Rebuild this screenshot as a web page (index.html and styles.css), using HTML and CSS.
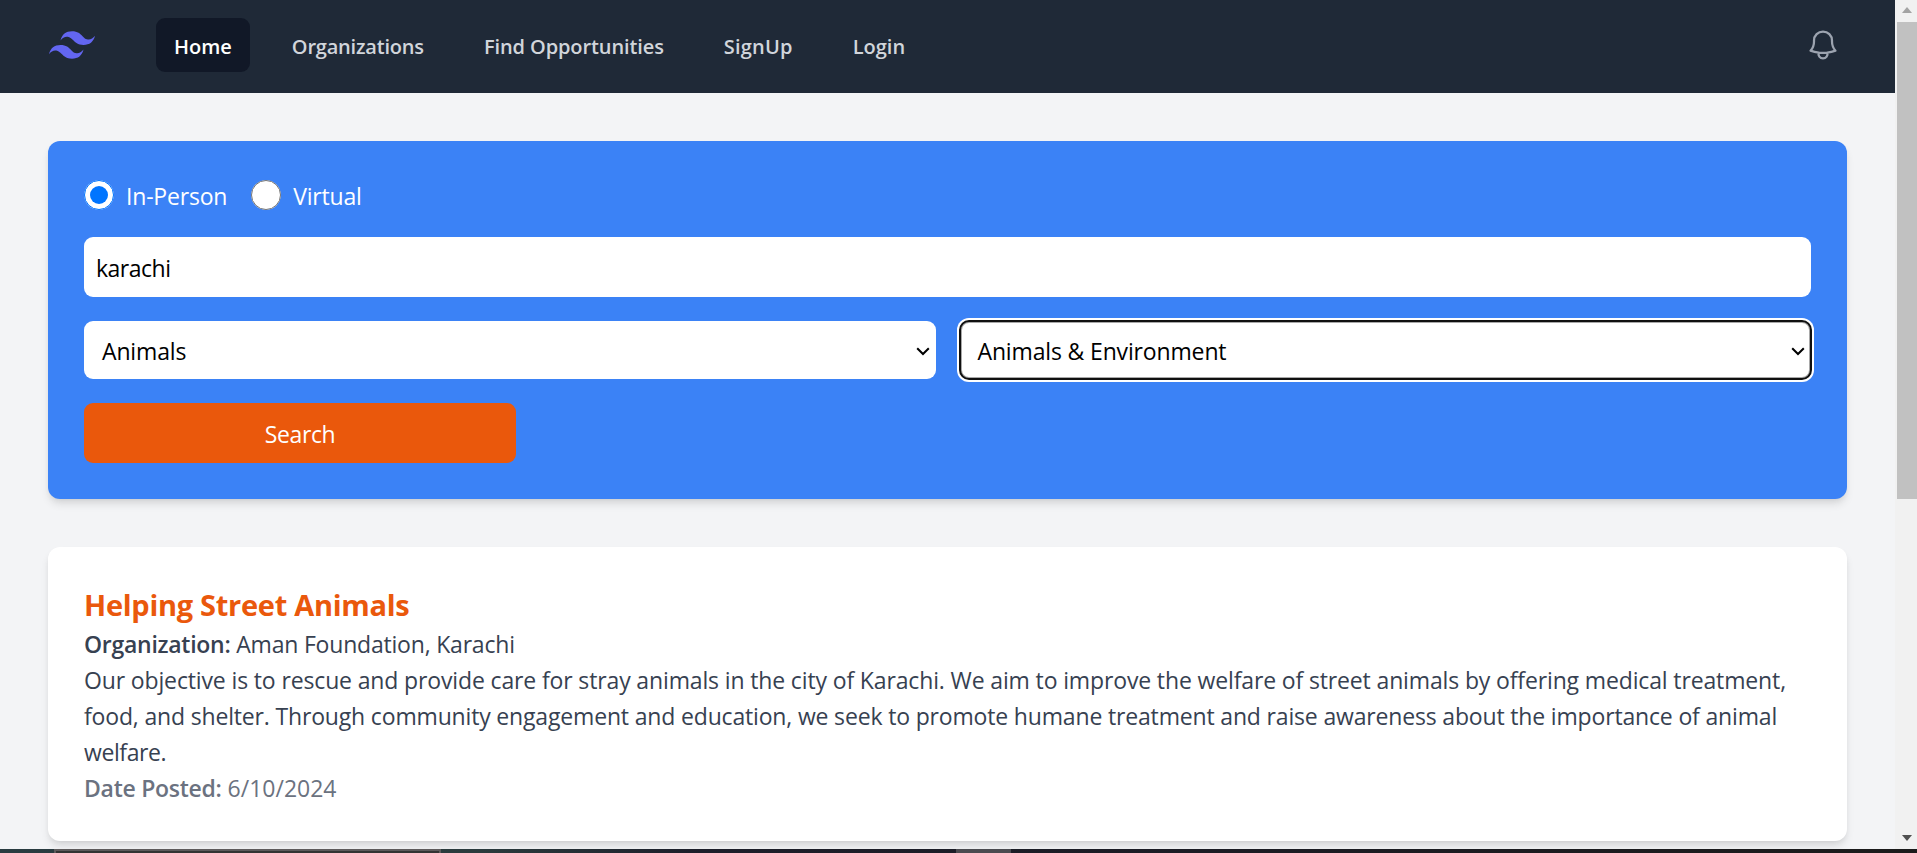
FILE: index.html
```html
<!DOCTYPE html>
<html lang="en">
<head>
<meta charset="utf-8">
<title>Volunteer Opportunities</title>
<link rel="stylesheet" href="styles.css">
</head>
<body>
<div class="viewport">
  <div class="page">
    <nav class="nav">
      <svg class="logo" viewBox="0 0 48 48" fill="#6366f1"><path d="M24 9.604c-6.4 0-10.4 3.199-12 9.597 2.4-3.199 5.2-4.398 8.4-3.599 1.826.456 3.131 1.781 4.576 3.247C27.328 21.236 30.051 24 36 24c6.4 0 10.4-3.199 12-9.598-2.4 3.2-5.2 4.4-8.4 3.6-1.825-.456-3.13-1.781-4.575-3.247C32.672 12.367 29.948 9.604 24 9.604zM12 24c-6.4 0-10.4 3.199-12 9.598 2.4-3.2 5.2-4.4 8.4-3.6 1.825.457 3.13 1.781 4.575 3.247 2.353 2.388 5.077 5.152 11.025 5.152 6.4 0 10.4-3.2 12-9.598-2.4 3.199-5.2 4.399-8.4 3.599-1.826-.456-3.131-1.781-4.576-3.247C20.672 26.764 17.949 24 12 24z"/></svg>
      <div class="links">
        <a class="link active">Home</a>
        <a class="link orgs">Organizations</a>
        <a class="link find">Find Opportunities</a>
        <a class="link signup">SignUp</a>
        <a class="link">Login</a>
      </div>
      <svg class="bell" viewBox="0 0 24 24" fill="none" stroke="#9ca3af" stroke-width="1.5" stroke-linecap="round" stroke-linejoin="round"><path d="M14.857 17.082a23.848 23.848 0 005.454-1.31A8.967 8.967 0 0118 9.75v-.7V9A6 6 0 006 9v.75a8.967 8.967 0 01-2.312 6.022c1.733.64 3.56 1.085 5.455 1.31m5.714 0a24.255 24.255 0 01-5.714 0m5.714 0a3 3 0 11-5.714 0"/></svg>
    </nav>
    <main class="content">
      <form class="panel">
        <div class="radios">
          <label class="option"><input class="radio" type="radio" name="mode" checked><span class="option-text">In-Person</span></label>
          <label class="option"><input class="radio" type="radio" name="mode"><span class="option-text">Virtual</span></label>
        </div>
        <input class="field" type="text" value="karachi">
        <div class="selects">
          <div class="select"><span>Animals</span><svg class="chevron" viewBox="0 0 14 9"><path d="M1.2 1.2 7 7l5.800-5.800"/></svg></div>
          <div class="select focused"><span>Animals &amp; Environment</span><svg class="chevron" viewBox="0 0 14 9"><path d="M1.200 1.200 7 7l5.800-5.800"/></svg></div>
        </div>
        <button class="search" type="button">Search</button>
      </form>
      <article class="card">
        <h2 class="title">Helping Street Animals</h2>
        <p class="line org"><strong>Organization:</strong> Aman Foundation, Karachi</p>
        <p class="line"><span class="first">Our objective is to rescue and provide care for stray animals in the city of Karachi. We aim to improve the welfare of street animals by offering medical treatment,</span><br><span class="second">food, and shelter. Through community engagement and education, we seek to promote humane treatment and raise awareness about the importance of animal</span><br><span class="third">welfare.</span></p>
        <p class="line posted"><strong>Date Posted:</strong> 6/10/2024</p>
      </article>
    </main>
  </div>
  <div class="scrollbar"><i class="up"></i><div class="thumb"></div><i class="down"></i></div>
</div>
<footer class="taskbar"><div class="task-search"></div><div class="task-active"></div></footer>
</body>
</html>
```
FILE: styles.css
```css
* { box-sizing: border-box; }
body { margin: 0; height: 853px; overflow: hidden; display: flex; flex-direction: column; background: #f3f4f6; font-family: "Open Sans", "Noto Sans", sans-serif; font-size: 23px; line-height: 36px; color: #374151; }
.viewport { display: flex; height: 849px; overflow: hidden; }
.page { flex: 1; }
.nav { height: 93px; background: #1f2937; display: flex; align-items: center; padding: 0 54px 3px 49px; }
.logo { width: 46px; height: 46px; }
.links { display: flex; gap: 24px; margin-left: 61px; flex: 1; }
.link { height: 54px; padding: 14px 18px 10px; line-height: 30px; border-radius: 9px; font-size: 20px; font-weight: 600; color: #d1d5db; white-space: nowrap; }
.active { background: #111827; color: #fff; }
.orgs { letter-spacing: -.2px; }
.find { letter-spacing: -.1px; }
.signup { letter-spacing: .2px; }
.bell { width: 36px; height: 36px; }
.content { padding: 48px; display: flex; flex-direction: column; gap: 48px; }
.panel, .card { border-radius: 12px; padding: 36px; box-shadow: 0 6px 9px -1.5px rgba(0,0,0,.1), 0 3px 6px -3px rgba(0,0,0,.1); }
.panel { height: 358px; background: #3b82f6; color: #fff; display: flex; flex-direction: column; letter-spacing: -.15px; }
.radios { display: flex; gap: 24px; height: 36px; margin-bottom: 24px; }
.option { display: flex; align-items: center; }
.option-text { padding-top: 2px; letter-spacing: -.2px; }
.radio { width: 30px; height: 30px; margin: 0 12px 0 0; }
.field { display: block; width: 100%; height: 60px; border: 0; border-radius: 9px; padding: 2px 12px 0; font: inherit; letter-spacing: -.5px; color: #000; background: #fff; margin-bottom: 24px; }
.selects { display: grid; grid-template-columns: 1fr 1fr; gap: 24px; height: 58px; margin-bottom: 24px; }
.select { display: flex; align-items: center; justify-content: space-between; background: #fff; border-radius: 9px; color: #000; padding: 2px 6px 0 18px; }
.focused { outline: 2px solid #101010; outline-offset: -1px; box-shadow: 0 0 0 3px #fff, inset 0 0 0 2px #a8a8a8; }
.chevron { width: 14px; height: 9px; fill: none; stroke: #000; stroke-width: 2; }
.search { width: 432px; height: 60px; border: 0; border-radius: 9px; background: #ea580c; color: #fff; font: inherit; letter-spacing: -.4px; padding: 2px 0 0; }
.card { height: 294px; padding-top: 37px; background: #fff; }
.title { margin: 0; font-size: 29px; line-height: 42px; font-weight: 700; letter-spacing: -.28px; color: #ea580c; }
.line { margin: 0; white-space: nowrap; }
.line strong { font-weight: 600; letter-spacing: -.27px; }
.org { letter-spacing: -.2px; }
.first { letter-spacing: -.138px; }
.second { letter-spacing: -.166px; }
.third { letter-spacing: -.4px; }
.posted { color: #6b7280; }
.scrollbar { width: 22px; background: #f1f1f1; padding-left: 2px; display: flex; flex-direction: column; align-items: center; }
.up, .down { border: 5px solid transparent; }
.up { border-top: 0; border-bottom: 6px solid #a3a3a3; margin: 7px 0 9px; }
.thumb { width: 20px; height: 477px; background: #c1c1c1; }
.down { border-bottom: 0; border-top: 6px solid #505050; margin-top: auto; margin-bottom: 8px; }
.taskbar { height: 4px; display: flex; background: linear-gradient(90deg, #293b40 0, #2b3b3d 480px, #1c1e2a 700px, #1b1c24 1200px, #1b1b1b 1917px); }
.task-search { width: 387px; margin-left: 54px; background: #333; border: 2px solid #5d5a5b; border-bottom: 0; }
.task-active { width: 55px; margin-left: 515px; background: #4b4b50; }
```
